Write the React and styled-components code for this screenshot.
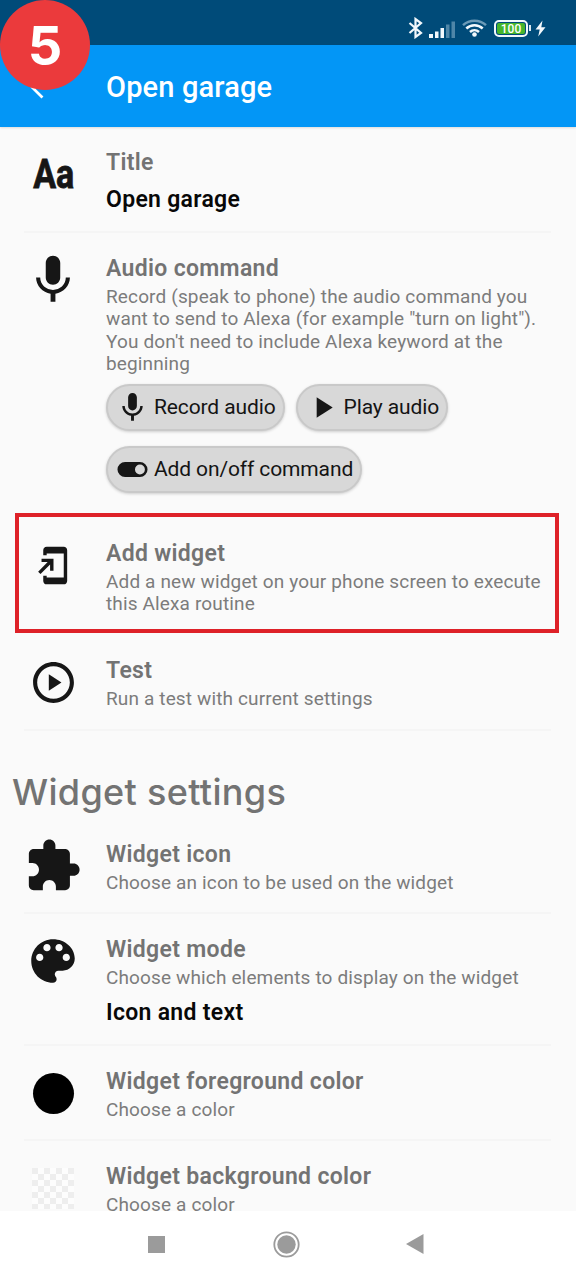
import React from 'react'
import styled, { createGlobalStyle } from 'styled-components'

const MIC = 'M12 14c1.66 0 2.99-1.34 2.99-3L15 5c0-1.66-1.34-3-3-3S9 3.34 9 5v6c0 1.66 1.34 3 3 3zm5.3-3c0 3-2.54 5.1-5.3 5.1S6.7 14 6.7 11H5c0 3.41 2.72 6.23 6 6.72V21h2v-3.28c3.28-.48 6-3.3 6-6.72h-1.7z'
const HOME = 'M18 1.01L8 1c-1.1 0-2 .9-2 2v3h2V5h10v14H8v-1H6v3c0 1.1.9 2 2 2h10c1.1 0 2-.9 2-2V3c0-1.1-.9-1.99-2-1.99zM10 15h2V8H5v2h3.59L3 15.59 4.41 17 10 11.41z'
const PLAY_CIRCLE = 'M9.7 16l6.2-4-6.2-4v8zM12 2C6.48 2 2 6.48 2 12s4.48 10 10 10 10-4.48 10-10S17.52 2 12 2zm0 18c-4.41 0-8-3.59-8-8s3.59-8 8-8 8 3.59 8 8-3.59 8-8 8z'
const PUZZLE = 'M20.5 11H19V7c0-1.1-.9-2-2-2h-4V3.5C13 2.12 11.88 1 10.5 1S8 2.12 8 3.5V5H4c-1.1 0-1.99.9-1.99 2v3.8H3.5c1.49 0 2.7 1.21 2.7 2.7s-1.21 2.7-2.7 2.7H2V20c0 1.1.9 2 2 2h3.8v-1.5c0-1.49 1.21-2.7 2.7-2.7 1.49 0 2.7 1.21 2.7 2.7V22H17c1.1 0 2-.9 2-2v-4h1.5c1.38 0 2.5-1.12 2.5-2.5S21.88 11 20.5 11z'
const PALETTE = 'M12 3c-4.97 0-9 4.03-9 9s4.03 9 9 9c.83 0 1.5-.67 1.5-1.5 0-.39-.15-.74-.39-1.01-.23-.26-.38-.61-.38-.99 0-.83.67-1.5 1.5-1.5H16c2.76 0 5-2.24 5-5 0-4.42-4.03-8-9-8zm-5.5 9c-.83 0-1.5-.67-1.5-1.5S5.67 9 6.5 9 8 9.67 8 10.5 7.33 12 6.5 12zm3-4C8.67 8 8 7.33 8 6.5S8.67 5 9.5 5s1.5.67 1.5 1.5S10.33 8 9.5 8zm5 0c-.83 0-1.5-.67-1.5-1.5S13.67 5 14.5 5s1.5.67 1.5 1.5S15.33 8 14.5 8zm3 4c-.83 0-1.5-.67-1.5-1.5S16.67 9 17.5 9s1.5.67 1.5 1.5-.67 1.5-1.5 1.5z'
const TOGGLE = 'M6.9 6.8h10.2a5.2 5.2 0 0 1 0 10.4H6.9a5.2 5.2 0 0 1 0-10.4zM17.1 8.6a3.4 3.4 0 1 0 0 6.8 3.4 3.4 0 0 0 0-6.8z'

function Icon({ d, size }) {
    return (
        <svg width={size} height={size} viewBox="0 0 24 24" fill="#161616" fillRule="evenodd">
            <path d={d} />
        </svg>
    )
}

function Row({ icon, title, text, value, height, line, children }) {
    return (
        <RowWrap $height={height} $line={line}>
            <IconBox>{icon}</IconBox>
            <RowBody>
                <RowTitle>{title}</RowTitle>
                {text && <RowText>{text}</RowText>}
                {value && <RowValue $afterText={!!text}>{value}</RowValue>}
                {children}
            </RowBody>
        </RowWrap>
    )
}

function StatusIcons() {
    return (
        <StatusBar>
            <svg width="15" height="22" viewBox="0 0 15 22" fill="none" stroke="#f2f8fc" strokeWidth="2.200">
                <path d="M1.500 6l11.500 10L7.500 20V2l5.500 4-11.500 10" />
            </svg>
            <SignalIcon width="27" height="17" viewBox="0 0 27 17">
                <path d="M0 13h4v4H0zM6 10.500h3.500V17H6zM11.500 7H15v10h-3.500z" fill="#f2f8fc" />
                <path d="M17 3.500h3.500V17H17zM22.500 0.500H26V17h-3.500z" fill="#4f86a8" />
            </SignalIcon>
            <WifiIcon width="25" height="18" viewBox="0 0 25 18" fill="none" strokeWidth="2.500">
                <path d="M1 6.200C7.500 0.200 17.500 0.200 24 6.200" stroke="#6b9ab7" />
                <path d="M4.300 9.500c4.700-4.400 11.700-4.400 16.400 0M8 13c2.600-2.400 6.400-2.400 9 0" stroke="#f2f8fc" />
                <circle cx="12.500" cy="15.500" r="2.300" fill="#f2f8fc" />
            </WifiIcon>
            <Battery>
                <BatteryLevel>100</BatteryLevel>
            </Battery>
            <BatteryTip />
            <svg width="11" height="17" viewBox="0 0 11 17" fill="#f2f8fc">
                <path d="M7.500 0.500L0.500 9.500h4.200L3.200 16.500l7.300-9.300H6.300z" />
            </svg>
        </StatusBar>
    )
}

function App() {
    return (
        <Screen>
            <GlobalStyle />
            <Badge>5</Badge>
            <StatusIcons />
            <AppBar>
                <svg width="33" height="33" viewBox="0 0 24 24" fill="#fff">
                    <path d="M20 11H7.830l5.590-5.590L12 4l-8 8 8 8 1.410-1.410L7.830 13H20v-2z" />
                </svg>
                <AppTitle>Open garage</AppTitle>
            </AppBar>
            <Content>
                <Row height={106} line icon={<Letters>Aa</Letters>} title="Title" value="Open garage" />
                <Row
                    height={285}
                    icon={<Icon d={MIC} size={58} />}
                    title="Audio command"
                    text={'Record (speak to phone) the audio command you want to send to Alexa (for example "turn on light"). You don\'t need to include Alexa keyword at the beginning'}
                >
                    <Buttons>
                        <Button><Icon d={MIC} size={35} />Record audio</Button>
                        <Button><Icon d="M8 5v14l11-7z" size={35} />Play audio</Button>
                        <Button><Icon d={TOGGLE} size={35} />Add on/off command</Button>
                    </Buttons>
                </Row>
                <Highlighted>
                    <Row
                        height={117}
                        icon={<Icon d={HOME} size={41} />}
                        title="Add widget"
                        text="Add a new widget on your phone screen to execute this Alexa routine"
                    />
                    <HighlightFrame />
                </Highlighted>
                <Row height={96} line icon={<Icon d={PLAY_CIRCLE} size={49} />} title="Test" text="Run a test with current settings" />
                <SectionTitle>Widget settings</SectionTitle>
                <Row height={95} line icon={<Icon d={PUZZLE} size={58} />} title="Widget icon" text="Choose an icon to be used on the widget" />
                <Row
                    height={132}
                    line
                    icon={<Icon d={PALETTE} size={58} />}
                    title="Widget mode"
                    text="Choose which elements to display on the widget"
                    value="Icon and text"
                />
                <Row height={95} line icon={<Dot />} title="Widget foreground color" text="Choose a color" />
                <Row height={95} icon={<Checker />} title="Widget background color" text="Choose a color" />
            </Content>
            <NavBar>
                <NavSquare />
                <NavCircle width="27" height="27" viewBox="0 0 27 27">
                    <circle cx="13.500" cy="13.500" r="12.200" fill="none" stroke="#9b9b9b" strokeWidth="1.800" />
                    <circle cx="13.500" cy="13.500" r="9.200" fill="#9b9b9b" />
                </NavCircle>
                <svg width="18" height="20" viewBox="0 0 18 20" fill="#9b9b9b">
                    <path d="M17.500 0v20L0 10z" />
                </svg>
            </NavBar>
        </Screen>
    )
}

export default App

const GlobalStyle = createGlobalStyle`
    body {
        margin: 0;
        font-family: Roboto, "Liberation Sans", sans-serif;
    }

    svg {
        display: block;
        flex-shrink: 0;
    }
`

const Screen = styled.div`
    position: relative;
    width: 576px;
    height: 1280px;
    display: flex;
    flex-direction: column;
    overflow: hidden;
    background: #fafafa;
`

const Badge = styled.div`
    position: absolute;
    top: 0;
    left: 0;
    z-index: 2;
    width: 90px;
    height: 90px;
    border-radius: 50%;
    background: #eb3a3c;
    color: #fff;
    font: 650 54px/91px Inter, sans-serif;
    text-align: center;
`

const StatusBar = styled.div`
    height: 45px;
    flex-shrink: 0;
    box-sizing: border-box;
    padding: 11px 30px 0 0;
    display: flex;
    align-items: center;
    justify-content: flex-end;
    background: #004b79;
`

const SignalIcon = styled.svg`
    margin-left: 6px;
    margin-top: 2px;
`

const WifiIcon = styled.svg`
    margin-left: 6px;
`

const Battery = styled.div`
    width: 34px;
    height: 17px;
    box-sizing: border-box;
    margin-left: 7px;
    padding: 1px;
    border: 2px solid #f2f8fc;
    border-radius: 5px;
    display: flex;
`

const BatteryLevel = styled.div`
    flex: 1;
    border-radius: 2px;
    background: #46b52b;
    color: #fff;
    font-size: 12px;
    font-weight: 500;
    line-height: 12px;
    text-align: center;
`

const BatteryTip = styled.div`
    width: 2px;
    height: 6px;
    margin: 0 4px 0 1px;
    background: #dbe8f0;
`

const AppBar = styled.div`
    height: 82px;
    flex-shrink: 0;
    box-sizing: border-box;
    padding: 2px 25px 0;
    display: flex;
    align-items: center;
    background: #0396f6;
    position: relative;
    z-index: 1;
    box-shadow: 0 1px 2px rgba(0, 0, 0, .12);
`

const AppTitle = styled.div`
    margin-left: 48px;
    color: #fff;
    font-size: 29px;
    font-weight: 500;
    letter-spacing: .15px;
`

const Content = styled.div`
    flex: 1;
    min-height: 0;
    overflow: hidden;
`

const RowWrap = styled.div`
    height: ${props => props.$height}px;
    box-sizing: border-box;
    margin: 0 25px 0 24px;
    border-bottom: ${props => props.$line ? '2px solid #f5f5f5' : 'none'};
    display: flex;
`

const IconBox = styled.div`
    width: 58px;
    height: 58px;
    flex-shrink: 0;
    margin-top: 18px;
    display: flex;
    align-items: center;
    justify-content: center;
`

const RowBody = styled.div`
    flex: 1;
    margin-left: 24px;
    padding-top: 22px;
`

const RowTitle = styled.div`
    color: #737373;
    font-size: 23px;
    font-weight: 600;
    line-height: 28px;
    letter-spacing: .32px;
`

const RowText = styled.div`
    margin-top: 3px;
    margin-right: -6px;
    color: #7c7c7c;
    font-size: 19px;
    line-height: 22.4px;
    letter-spacing: .14px;
`

const RowValue = styled.div`
    margin-top: ${props => props.$afterText ? 10 : 9}px;
    color: #080808;
    font-size: 23px;
    font-weight: 600;
    line-height: 28px;
    letter-spacing: .3px;
`

const Letters = styled.span`
    margin-left: 2px;
    color: #161616;
    font-size: 41px;
    font-weight: 700;
    line-height: 58px;
    transform: scaleX(.83);
    -webkit-text-stroke: .8px #161616;
`

const Buttons = styled.div`
    margin-top: 8px;
    display: flex;
    flex-wrap: wrap;
    gap: 15px 11px;
`

const Button = styled.button`
    height: 47px;
    padding: 0 7px;
    border: 2px solid #c9c9c9;
    border-radius: 24px;
    display: flex;
    align-items: center;
    gap: 4px;
    background: #d8d8d8;
    box-shadow: 0 1px 3px rgba(0, 0, 0, .18);
    color: #141414;
    font-family: inherit;
    font-size: 21px;
    letter-spacing: -.12px;
    white-space: nowrap;
`

const Highlighted = styled.div`
    position: relative;
`

const HighlightFrame = styled.div`
    position: absolute;
    inset: -5px 17px 2px 15px;
    border: 4px solid #de2128;
`

const SectionTitle = styled.h2`
    height: 88px;
    margin: 0;
    box-sizing: border-box;
    padding: 39px 0 0 12px;
    color: #737373;
    font: 500 36px/44px Inter, sans-serif;
    letter-spacing: .33px;
`

const Dot = styled.div`
    width: 41px;
    height: 41px;
    border-radius: 50%;
    background: #000;
`

const Checker = styled.div`
    width: 42px;
    height: 41px;
    background: repeating-conic-gradient(#fdfdfd 0 25%, #eeeeee 0 50%) 0 0 / 12px 12px;
`

const NavBar = styled.div`
    height: 69px;
    flex-shrink: 0;
    box-sizing: border-box;
    padding: 0 152px 3px 148px;
    display: flex;
    align-items: center;
    justify-content: space-between;
    background: #fff;
`

const NavSquare = styled.div`
    width: 17px;
    height: 17px;
    background: #9b9b9b;
`

const NavCircle = styled.svg`
    margin-left: 2px;
`
